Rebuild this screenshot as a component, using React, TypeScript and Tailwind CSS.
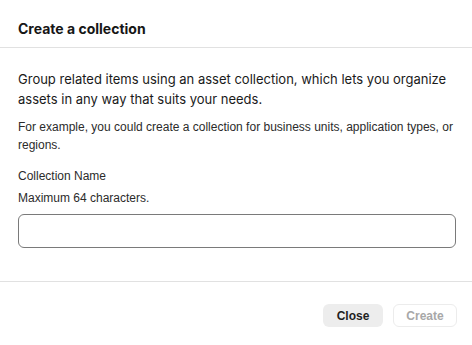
export default function App() {
  return (
    <div className="w-[472px] h-[345px] bg-white flex flex-col text-[#1f1f1f]">
      <div className="h-[48px] shrink-0 flex items-center px-[18px] border-b border-[#e1e1e1]">
        <h2 className="font-['Inter',sans-serif] font-bold text-[14px] text-[#161616] pt-[9px]">
          Create a collection
        </h2>
      </div>
      <div className="flex flex-col pl-[18px] pr-[16px] pt-[21px] flex-1 border-b border-[#e1e1e1]">
        <p className="font-['Inter',sans-serif] text-[13px] leading-[20px] text-[#1a1a1a]">
          Group related items using an asset collection, which lets you organize assets in any way that suits your needs.
        </p>
        <p className="mt-[9px] font-['Liberation_Sans',Arial,sans-serif] text-[12px] leading-[18px] text-[#2b2b2b]">
          For example, you could create a collection for business units, application types, or regions.
        </p>
        <label className="mt-[13px] font-['Liberation_Sans',Arial,sans-serif] text-[12px] leading-[18px] font-medium text-[#2b2b2b]">
          Collection Name
        </label>
        <p className="mt-[4px] font-['Liberation_Sans',Arial,sans-serif] text-[12px] leading-[18px] text-[#2b2b2b]">
          Maximum 64 characters.
        </p>
        <input
          type="text"
          className="mt-[7px] h-[34px] w-full rounded-[6px] border border-[#7a7a7a] bg-white px-2 outline-none"
        />
      </div>
      <div className="h-[63px] shrink-0 flex items-start justify-end gap-[10px] px-[15px] pt-[22px]">
        <button className="h-[23px] w-[60px] rounded-[6px] bg-[#ededed] font-['Liberation_Sans',Arial,sans-serif] text-[12px] font-bold text-[#1f1f1f]">
          Close
        </button>
        <button className="h-[23px] w-[64px] rounded-[6px] border border-[#ececec] bg-white font-['Liberation_Sans',Arial,sans-serif] text-[12px] font-bold text-[#a8a8a8]">
          Create
        </button>
      </div>
    </div>
  );
}
